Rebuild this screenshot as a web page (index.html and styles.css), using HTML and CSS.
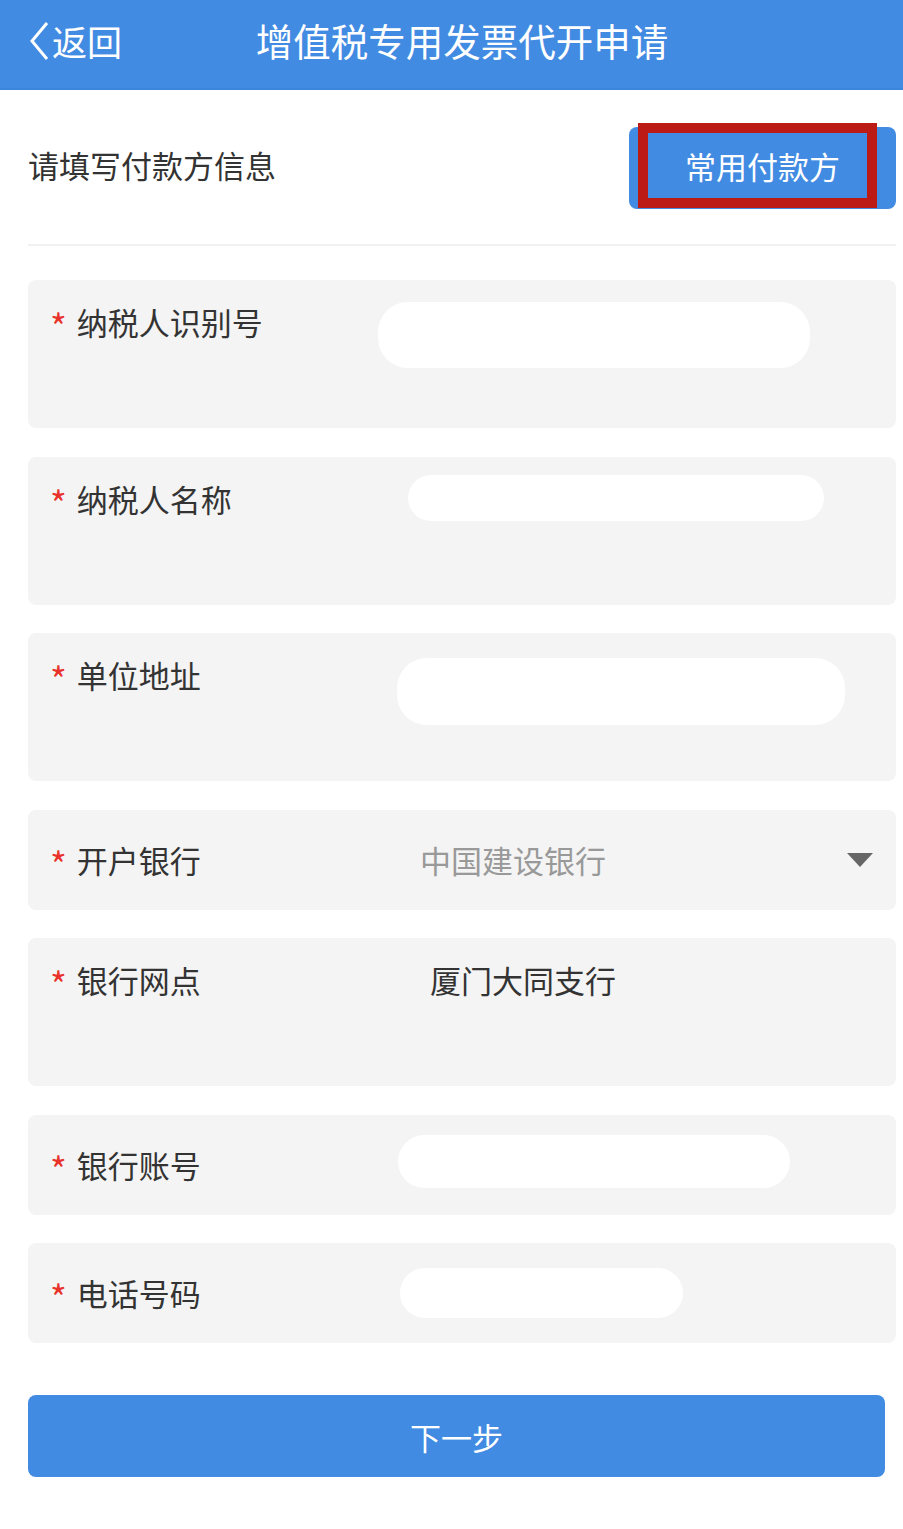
FILE: index.html
```html
<!DOCTYPE html>
<html lang="zh-CN">
<head>
    <meta charset="UTF-8">
    <meta name="viewport" content="width=device-width, initial-scale=1.0">
    <title>增值税专用发票代开申请</title>
    <link rel="stylesheet" href="styles.css">
</head>
<body>

<div class="header">
    <div class="back">
        <svg class="back-icon" width="22" height="40" viewBox="0 0 22 40">
            <path d="M19 2 L4 20 L19 38" fill="none" stroke="#fff" stroke-width="3"/>
        </svg>
        <span>返回</span>
    </div>
    <h1>增值税专用发票代开申请</h1>
</div>

<div class="page">
    <div class="top-row">
        <span class="hint">请填写付款方信息</span>
        <div class="payer-btn">
            常用付款方
            <div class="mark"></div>
        </div>
    </div>

    <div class="form">
        <div class="field tall">
            <div class="label"><span class="req">*</span>纳税人识别号</div>
            <div class="mask mask-id"></div>
        </div>
        <div class="field tall">
            <div class="label"><span class="req">*</span>纳税人名称</div>
            <div class="mask mask-name"></div>
        </div>
        <div class="field tall">
            <div class="label"><span class="req">*</span>单位地址</div>
            <div class="mask mask-addr"></div>
        </div>
        <div class="field short">
            <div class="label"><span class="req">*</span>开户银行</div>
            <div class="value placeholder">中国建设银行</div>
            <div class="arrow"></div>
        </div>
        <div class="field tall">
            <div class="label"><span class="req">*</span>银行网点</div>
            <div class="value branch">厦门大同支行</div>
        </div>
        <div class="field short">
            <div class="label"><span class="req">*</span>银行账号</div>
            <div class="mask mask-acct"></div>
        </div>
        <div class="field short">
            <div class="label"><span class="req">*</span>电话号码</div>
            <div class="mask mask-tel"></div>
        </div>
    </div>

    <button class="next-btn">下一步</button>
</div>

</body>
</html>
```

FILE: styles.css
```css
body {
    font-family: "Noto Sans CJK SC", "Noto Sans", sans-serif;
    background-color: #fff;
    color: #333;
    margin: 0;
    padding: 0;
}

.header {
    height: 88px;
    background-color: #428be2;
    border-bottom: 2px solid #3b85dd;
    display: flex;
    align-items: center;
    position: relative;
}

.back {
    display: flex;
    align-items: center;
    color: #fff;
    font-size: 35px;
    line-height: 40px;
    padding-left: 28px;
    margin-top: -6px;
    gap: 2px;
}

.back-icon {
    display: block;
}

.header h1 {
    position: absolute;
    left: 0;
    right: 0;
    top: 0;
    margin: 0;
    line-height: 80px;
    text-align: center;
    font-size: 37.5px;
    font-weight: normal;
    color: #fff;
    padding-left: 21px;
}

.page {
    padding: 0 7px 0 28px;
}

.top-row {
    display: flex;
    align-items: center;
    justify-content: space-between;
    padding: 37px 0 35px;
    border-bottom: 2px solid #f1f1f1;
}

.hint {
    font-size: 31px;
    line-height: 40px;
    margin-top: -6px;
    color: #333;
}

.payer-btn {
    position: relative;
    width: 267px;
    height: 82px;
    background-color: #428be2;
    border-radius: 8px;
    color: #fff;
    font-size: 31px;
    line-height: 78px;
    text-align: center;
    box-sizing: border-box;
}

.mark {
    position: absolute;
    left: 9px;
    top: -4px;
    width: 239px;
    height: 85px;
    border: 10px solid #bc1a14;
    box-sizing: border-box;
}

.form {
    display: flex;
    flex-direction: column;
    gap: 28.5px;
    margin-top: 34px;
}

.field {
    display: flex;
    background-color: #f4f4f4;
    border-radius: 8px;
    padding: 0 23px 0 22px;
    box-sizing: border-box;
}

.field.tall {
    height: 148px;
    align-items: flex-start;
    padding-top: 22px;
}

.field.short {
    height: 100px;
    align-items: center;
}

.label {
    width: 328px;
    flex-shrink: 0;
    display: flex;
    align-items: center;
    font-size: 31px;
    line-height: 40px;
    color: #333;
}

.req {
    color: #e8322a;
    font-size: 36px;
    line-height: 40px;
    margin: 0 10px 0 0;
    position: relative;
    top: 3px;
}

.value {
    font-size: 31px;
    line-height: 40px;
}

.placeholder {
    color: #999;
    margin-left: 42px;
}

.branch {
    color: #333;
    margin-left: 52px;
}

.arrow {
    margin-left: auto;
    width: 0;
    height: 0;
    border-left: 13px solid transparent;
    border-right: 13px solid transparent;
    border-top: 14px solid #666;
}

.mask {
    background-color: #fff;
    border-radius: 30px;
}

.mask-id {
    width: 432px;
    height: 66px;
    margin-top: 0;
}

.mask-name {
    width: 416px;
    height: 46px;
    margin-left: 30px;
    margin-top: -4px;
}

.mask-addr {
    width: 448px;
    height: 67px;
    margin-left: 19px;
    margin-top: 3px;
}

.mask-acct {
    width: 392px;
    height: 53px;
    margin-left: 20px;
    margin-top: -6px;
}

.mask-tel {
    width: 283px;
    height: 50px;
    margin-left: 22px;
    margin-top: 0;
}

.next-btn {
    display: block;
    width: 857px;
    height: 82px;
    margin-top: 52px;
    border: none;
    border-radius: 8px;
    background-color: #418be2;
    color: #fff;
    font-family: inherit;
    font-size: 31px;
    cursor: pointer;
}
```
